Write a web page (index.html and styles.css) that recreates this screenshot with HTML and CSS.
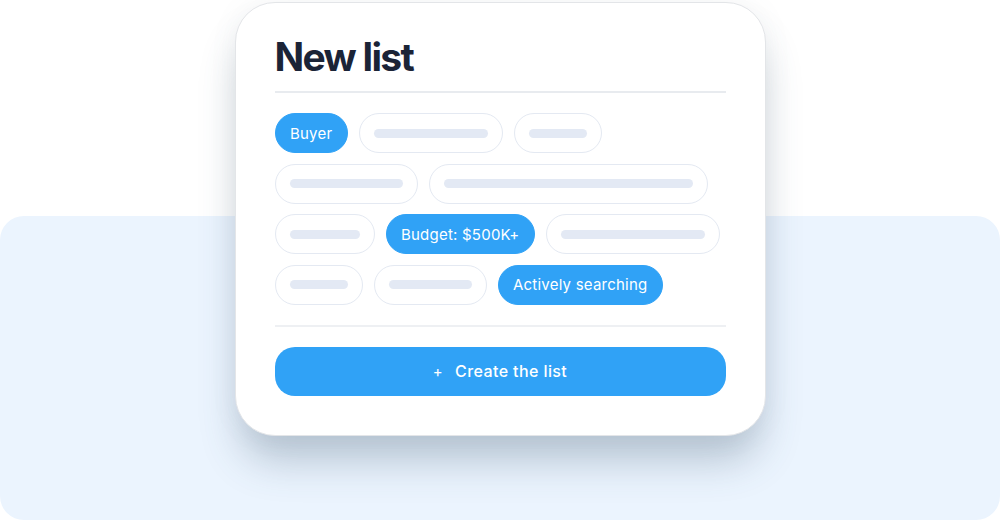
FILE: index.html
```html
<!DOCTYPE html>
<html lang="en">
<head>
<meta charset="utf-8">
<title>New list</title>
<link rel="stylesheet" href="styles.css">
</head>
<body>
<div class="stage">
  <div class="backdrop"></div>
  <section class="card">
    <h1 class="title">New list</h1>
    <div class="chips">
      <div class="chip-row">
        <span class="chip chip-on">Buyer</span>
        <span class="chip"><i class="bar" style="width:114px"></i></span>
        <span class="chip"><i class="bar" style="width:58px"></i></span>
      </div>
      <div class="chip-row">
        <span class="chip"><i class="bar" style="width:113px"></i></span>
        <span class="chip"><i class="bar" style="width:249px"></i></span>
      </div>
      <div class="chip-row">
        <span class="chip"><i class="bar" style="width:70px"></i></span>
        <span class="chip chip-on">Budget: $500K+</span>
        <span class="chip"><i class="bar" style="width:144px"></i></span>
      </div>
      <div class="chip-row">
        <span class="chip"><i class="bar" style="width:58px"></i></span>
        <span class="chip"><i class="bar" style="width:83px"></i></span>
        <span class="chip chip-on">Actively searching</span>
      </div>
    </div>
    <button class="create"><span class="plus">+</span>Create the list</button>
  </section>
</div>
</body>
</html>
```
FILE: styles.css
```css
html, body {
  margin: 0;
  padding: 0;
  background: #ffffff;
}
body {
  font-family: Inter, "DejaVu Sans", sans-serif;
  width: 1000px;
  height: 521px;
  overflow: hidden;
}
.stage {
  position: relative;
  width: 1000px;
  height: 521px;
  padding-top: 2px;
  box-sizing: border-box;
}
.backdrop {
  position: absolute;
  left: 0;
  right: 0;
  top: 216px;
  bottom: 1px;
  background: #ebf4fe;
  border-radius: 24px;
}
.card {
  position: relative;
  width: 531px;
  height: 434px;
  margin: 0 auto;
  box-sizing: border-box;
  background: #ffffff;
  border: 1.5px solid #e3e5e8;
  border-radius: 40px;
  padding: 30px 39px 0 39px;
  box-shadow: 0 0 28px rgba(120, 130, 140, 0.07), 0 30px 40px -6px rgba(60, 85, 110, 0.3);
  display: flex;
  flex-direction: column;
}
.title {
  margin: 0;
  font-size: 39px;
  line-height: 48px;
  font-weight: 700;
  letter-spacing: -1.7px;
  color: #1b2437;
  padding-bottom: 10px;
  border-bottom: 2px solid #e8ebef;
}
.chips {
  display: flex;
  flex-direction: column;
  gap: 10.5px;
  padding: 20px 0 20px;
  border-bottom: 2px solid #eef0f3;
}
.chip-row {
  display: flex;
  gap: 11px;
}
.chip {
  height: 40px;
  box-sizing: border-box;
  border: 1.5px solid #e4e9f2;
  border-radius: 20px;
  padding: 0 14px;
  display: flex;
  align-items: center;
  background: #ffffff;
}
.bar {
  display: block;
  height: 9px;
  border-radius: 5px;
  background: #e3e9f4;
}
.chip-on {
  background: #30a2f6;
  border-color: #30a2f6;
  color: #ffffff;
  font-size: 15px;
  letter-spacing: 0.22px;
  padding: 0 14.5px;
}
.create {
  margin-top: 20px;
  height: 49px;
  border: none;
  border-radius: 20px;
  background: #30a2f6;
  color: #ffffff;
  font-family: Inter, "DejaVu Sans", sans-serif;
  font-size: 16px;
  font-weight: 500;
  letter-spacing: 0.4px;
  display: flex;
  align-items: center;
  justify-content: center;
  padding: 0;
}
.plus {
  font-weight: 400;
  margin-right: 12px;
  font-size: 15px;
}
```
